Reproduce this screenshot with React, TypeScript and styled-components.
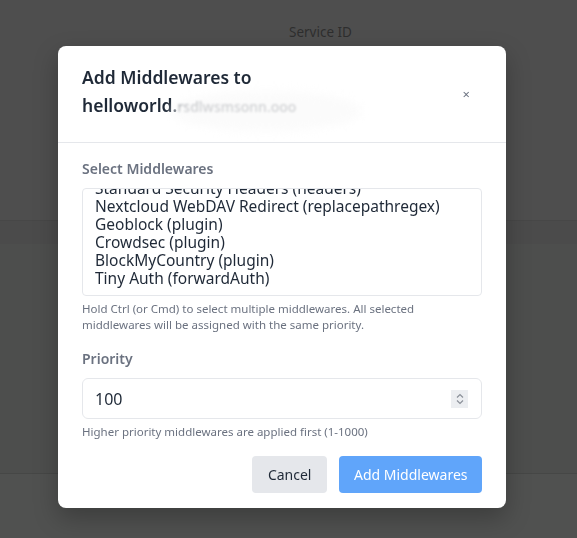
import React from "react";
import styled, { createGlobalStyle } from "styled-components";

const Global = createGlobalStyle`
  html, body { margin: 0; padding: 0; }
  body { font-family: "Noto Sans", "Open Sans", sans-serif; background: #4e4e4e; }
  * { box-sizing: border-box; }
`;

const Page = styled.div`
  min-height: 538px;
  display: flex;
  flex-direction: column;
  background: #4e4e4e;
`;

const PageHeader = styled.div`
  height: 221px;
  display: flex;
  justify-content: center;
  padding: 23px 0 0 64px;
  color: #2e2e2e;
  font-size: 13.5px;
  font-weight: 400;
  border-bottom: 1px solid #474747;
`;

const PageBand = styled.div`
  height: 23px;
  background: #4b4b4b;
`;

const PageBody = styled.div`
  height: 230px;
  background: #4d4e4d;
  border-bottom: 1px solid #464746;
`;

const PageFoot = styled.div`
  flex: 1;
  background: #505150;
`;

const Overlay = styled.div`
  position: fixed;
  inset: 0;
  display: flex;
  align-items: flex-start;
  justify-content: flex-start;
  padding: 46px 0 0 58px;
`;

const Modal = styled.div`
  width: 448px;
  background: #ffffff;
  border-radius: 8px;
  box-shadow: 0 10px 25px rgba(0, 0, 0, 0.25);
  overflow: hidden;
`;

const Header = styled.div`
  display: flex;
  align-items: center;
  justify-content: space-between;
  padding: 17px 36px 21px 24px;
  border-bottom: 1px solid #e5e7eb;
`;

const Title = styled.h2`
  margin: 0;
  font-size: 17.5px;
  line-height: 28px;
  font-weight: 600;
  color: #1f2937;
  width: 300px;
`;

const Redacted = styled.span`
  position: relative;
  color: #6b7078;
  font-weight: 500;
  font-size: 14px;
  filter: blur(0.8px);
`;

const Blur = styled.span`
  position: absolute;
  left: -6px;
  top: -6px;
  width: 190px;
  height: 40px;
  border-radius: 50%;
  background: rgba(250, 250, 250, 0.7);
  filter: blur(4px);
`;

const Close = styled.button`
  border: 0;
  background: transparent;
  color: #6b7280;
  font-size: 13px;
  padding: 0;
  margin-top: 5px;
  line-height: 1;
  font-family: inherit;
`;

const Body = styled.div`
  display: flex;
  flex-direction: column;
  padding: 16px 24px 15px 24px;
`;

const Label = styled.div`
  font-size: 14px;
  line-height: 20px;
  font-weight: 600;
  color: #6b7280;
  margin-bottom: 9px;
`;

const ListBox = styled.div`
  height: 108px;
  border: 1px solid #e5e7eb;
  border-radius: 4px;
  overflow: hidden;
  padding: 0 12px;
`;

const List = styled.div<{ $offset: number }>`
  margin-top: ${(p) => -p.$offset}px;
`;

const Option = styled.div`
  font-size: 15.5px;
  line-height: 18px;
  color: #1f2937;
  white-space: nowrap;
`;

const Help = styled.p`
  margin: 5px 0 0;
  font-size: 11.5px;
  line-height: 16px;
  color: #6b7280;
`;

const Spacer = styled.div<{ $h: number }>`
  height: ${(p) => p.$h}px;
`;

const InputBox = styled.div`
  height: 41px;
  border: 1px solid #e5e7eb;
  border-radius: 6px;
  display: flex;
  align-items: center;
  justify-content: space-between;
  padding: 0 13px 0 12px;
  font-size: 16px;
  color: #1f2937;
`;

const Spin = styled.div`
  width: 17px;
  height: 18px;
  background: #eceef1;
  display: flex;
  align-items: center;
  justify-content: center;
`;

const Actions = styled.div`
  display: flex;
  justify-content: flex-end;
  gap: 12px;
  margin-top: 16px;
`;

const Button = styled.button<{ $primary?: boolean }>`
  height: 37px;
  border: 0;
  border-radius: 4px;
  padding: 0 ${(p) => (p.$primary ? "14.5px" : "16px")};
  font-family: inherit;
  font-size: 14px;
  background: ${(p) => (p.$primary ? "#60a5fa" : "#e5e7eb")};
  color: ${(p) => (p.$primary ? "#ffffff" : "#1f2937")};
`;

const options = [
  "Standard Security Headers (headers)",
  "Nextcloud WebDAV Redirect (replacepathregex)",
  "Geoblock (plugin)",
  "Crowdsec (plugin)",
  "BlockMyCountry (plugin)",
  "Tiny Auth (forwardAuth)",
];

export default function App() {
  return (
    <>
      <Global />
      <Page>
        <PageHeader>Service ID</PageHeader>
        <PageBand />
        <PageBody />
        <PageFoot />
      </Page>
      <Overlay>
        <Modal>
          <Header>
            <Title>
              Add Middlewares to helloworld.
              <Redacted>
                rsdlwsmsonn.ooo
                <Blur />
              </Redacted>
            </Title>
            <Close>×</Close>
          </Header>
          <Body>
            <Label>Select Middlewares</Label>
            <ListBox>
              <List $offset={10}>
                {options.map((o) => (
                  <Option key={o}>{o}</Option>
                ))}
              </List>
            </ListBox>
            <Help>
              Hold Ctrl (or Cmd) to select multiple middlewares. All selected
              middlewares will be assigned with the same priority.
            </Help>
            <Spacer $h={16} />
            <Label>Priority</Label>
            <InputBox>
              <span>100</span>
              <Spin>
                <svg width="10" height="14" viewBox="0 0 10 14" fill="none" stroke="#8b9099" strokeWidth="1.2">
                  <path d="M2 5.5 L5 2.5 L8 5.5" />
                  <path d="M2 8.5 L5 11.5 L8 8.5" />
                </svg>
              </Spin>
            </InputBox>
            <Help>Higher priority middlewares are applied first (1-1000)</Help>
            <Actions>
              <Button>Cancel</Button>
              <Button $primary>Add Middlewares</Button>
            </Actions>
          </Body>
        </Modal>
      </Overlay>
    </>
  );
}
